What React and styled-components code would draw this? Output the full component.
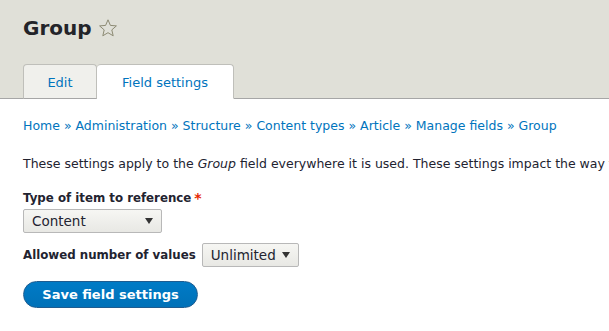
import styled, { createGlobalStyle } from "styled-components";

const GlobalStyle = createGlobalStyle`
  body {
    margin: 0;
    background: #ffffff;
    font-family: "DejaVu Sans", "Liberation Sans", sans-serif;
    color: #222330;
  }
`;

export default function App() {
  return (
    <>
      <GlobalStyle />
      <Header>
        <Title>
          Group
          <Star viewBox="0 0 20 20">
            <path d="M10 1.8l2.4 5.6 6 .5-4.6 4 1.4 5.9L10 14.7l-5.2 3.1 1.4-5.9-4.6-4 6-.5z" />
          </Star>
        </Title>
        <Tabs>
          <Tab $width={74}>Edit</Tab>
          <Tab $width={137} $active>
            Field settings
          </Tab>
        </Tabs>
      </Header>
      <Main>
        <Breadcrumb>
          <a>Home</a> » <a>Administration</a> » <a>Structure</a> »{" "}
          <a>Content types</a> » <a>Article</a> » <a>Manage fields</a> »{" "}
          <a>Group</a>
        </Breadcrumb>
        <Description>
          These settings apply to the <em>Group</em> field everywhere it is
          used. These settings impact the way that data is stored in the
          database and cannot be changed once data has been created.
        </Description>
        <Field>
          <Label>
            Type of item to reference<Required>*</Required>
          </Label>
          <Select $width={139}>
            Content
            <Arrow />
          </Select>
        </Field>
        <InlineField>
          <Label>Allowed number of values</Label>
          <Select $width={97}>
            Unlimited
            <Arrow />
          </Select>
        </InlineField>
        <Button>Save field settings</Button>
      </Main>
    </>
  );
}

const Header = styled.header`
  background: #e0e0d8;
  padding: 16px 23px 0;
  border-bottom: 1px solid #a6a6a6;
`;

const Title = styled.h1`
  margin: 0 0 24px;
  display: flex;
  align-items: center;
  gap: 6px;
  font-size: 20px;
  line-height: 24px;
  font-weight: 700;
  color: #232429;
`;

const Star = styled.svg`
  width: 20px;
  height: 20px;
  fill: none;
  stroke: #8c8a73;
  stroke-width: 1;
`;

const Tabs = styled.nav`
  display: flex;
  margin-bottom: -1px;
`;

const Tab = styled.div`
  width: ${(p) => p.$width}px;
  height: 35px;
  display: flex;
  align-items: center;
  justify-content: center;
  box-sizing: border-box;
  padding-top: 1px;
  font-size: 13px;
  color: #0074bd;
  border: 1px solid #bfbfba;
  border-bottom: ${(p) => (p.$active ? "1px solid #ffffff" : "1px solid #a6a6a6")};
  border-left: ${(p) => (p.$active ? "none" : "1px solid #bfbfba")};
  border-radius: 4px 4px 0 0;
  background: ${(p) => (p.$active ? "#ffffff" : "#f0f0ec")};
`;

const Main = styled.main`
  padding: 18px 23px 0;
  overflow: hidden;
`;

const Breadcrumb = styled.div`
  font-size: 12.5px;
  line-height: 18px;
  color: #0074bd;
  white-space: nowrap;
  a {
    color: #0074bd;
  }
`;

const Description = styled.p`
  margin: 20px 0 16px;
  font-size: 12.5px;
  line-height: 18px;
  white-space: nowrap;
  color: #222330;
`;

const Field = styled.div`
  display: flex;
  flex-direction: column;
  align-items: flex-start;
  gap: 2px;
  margin-bottom: 10px;
`;

const InlineField = styled.div`
  display: flex;
  align-items: center;
  gap: 6px;
  margin-bottom: 14px;
`;

const Label = styled.label`
  font-size: 11.8px;
  font-weight: 700;
  line-height: 18px;
  color: #222330;
`;

const Required = styled.span`
  margin-left: 3px;
  color: #e62600;
  font-size: 14px;
  vertical-align: top;
`;

const Select = styled.div`
  width: ${(p) => p.$width}px;
  height: 24px;
  box-sizing: border-box;
  display: flex;
  align-items: center;
  justify-content: space-between;
  padding: 0 8px 0 8px;
  font-size: 13.5px;
  color: #222330;
  background: linear-gradient(#f6f6f3, #e8e8e4);
  border: 1px solid #b8b8b8;
  border-radius: 2px;
`;

const Arrow = styled.span`
  width: 0;
  height: 0;
  border-left: 4px solid transparent;
  border-right: 4px solid transparent;
  border-top: 6px solid #333333;
`;

const Button = styled.button`
  width: 175px;
  height: 27px;
  border: 1px solid #1e5c90;
  border-radius: 14px;
  background: linear-gradient(#007bc6, #0071b8);
  color: #ffffff;
  font-family: "DejaVu Sans", "Liberation Sans", sans-serif;
  font-size: 13px;
  font-weight: 700;
  padding: 0;
`;
